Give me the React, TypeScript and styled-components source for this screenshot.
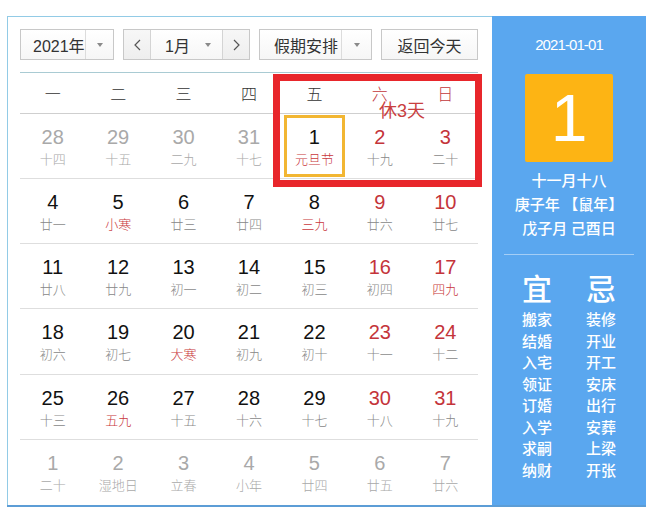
import React from "react";
import styled, { createGlobalStyle } from "styled-components";

const GlobalStyle = createGlobalStyle`
  html, body { margin: 0; padding: 0; background: #ffffff; }
  body { font-family: "Liberation Sans", "Noto Sans CJK SC", sans-serif; }
`;

const Frame = styled.div`
  display: flex;
  width: 639px;
  height: 491px;
  margin: 16px 0 0 7px;
  border-bottom: 2px solid #5c9dd6;
  box-sizing: border-box;
`;

const Main = styled.section`
  width: 485px;
  flex-shrink: 0;
  box-sizing: border-box;
  border-left: 1px solid #92cbe6;
  border-top: 1px solid #92cbe6;
  padding: 12px 14px 0 12px;
  display: flex;
  flex-direction: column;
  background: #ffffff;
`;

const Toolbar = styled.div`
  display: flex;
  gap: 9px;
  height: 31px;
  flex-shrink: 0;
`;

const Control = styled.div<{ $w: number }>`
  width: ${(p) => p.$w}px;
  height: 31px;
  box-sizing: border-box;
  border: 1px solid #c8c8c8;
  background: linear-gradient(#ffffff, #f6f6f6);
  display: flex;
  align-items: stretch;
  font-size: 16px;
  color: #333333;
`;

const Label = styled.div<{ $pad: number }>`
  flex: 1;
  display: flex;
  align-items: center;
  padding-left: ${(p) => p.$pad}px;
  white-space: nowrap;
`;

const ArrowPart = styled.div<{ $w: number }>`
  width: ${(p) => p.$w}px;
  border-left: 1px solid #dcdcdc;
  display: flex;
  align-items: center;
  justify-content: center;
`;

const Caret = styled.span`
  width: 0;
  height: 0;
  border-left: 3.5px solid transparent;
  border-right: 3.5px solid transparent;
  border-top: 4px solid #8a8a8a;
`;

const NavButton = styled.div<{ $side: "left" | "right" }>`
  width: 26px;
  background: linear-gradient(#f7f7f7, #eeeeee);
  display: flex;
  align-items: center;
  justify-content: center;
  ${(p) =>
    p.$side === "left"
      ? "border-right: 1px solid #d4d4d4;"
      : "border-left: 1px solid #d4d4d4;"}
`;

const MonthMiddle = styled.div`
  flex: 1;
  display: flex;
  align-items: center;
  justify-content: space-between;
  padding: 0 11px 0 14px;
`;

const TodayLabel = styled.div`
  flex: 1;
  display: flex;
  align-items: center;
  justify-content: center;
`;

const Grid = styled.div`
  position: relative;
  margin-top: 12px;
  flex: 1;
  display: grid;
  grid-template-columns: repeat(7, 1fr);
  grid-template-rows: 41px repeat(6, 1fr);
  border-top: 1px solid #a9cbd3;
`;

const HeaderCell = styled.div<{ $weekend: boolean }>`
  display: flex;
  align-items: center;
  justify-content: center;
  border-bottom: 1px solid #cfcfcf;
  font-family: "Noto Sans CJK SC", sans-serif;
  font-size: 16px;
  font-weight: 300;
  color: ${(p) => (p.$weekend ? "#c2373b" : "#333333")};
`;

const Cell = styled.div<{ $last: boolean }>`
  display: flex;
  padding: 1px 2px;
  box-sizing: border-box;
  min-height: 0;
  border-bottom: ${(p) => (p.$last ? "none" : "1px solid #dedede")};
`;

const DayBox = styled.div<{ $selected: boolean }>`
  flex: 1;
  display: flex;
  flex-direction: column;
  align-items: center;
  padding-top: 7px;
  border: 3px solid ${(p) => (p.$selected ? "#f2b632" : "transparent")};
`;

const Num = styled.div<{ $color: string }>`
  font-family: "Liberation Sans", sans-serif;
  font-size: 20px;
  line-height: 24px;
  color: ${(p) => p.$color};
`;

const Lunar = styled.div<{ $color: string }>`
  margin-top: 1px;
  font-family: "Noto Sans CJK SC", sans-serif;
  font-size: 13px;
  line-height: 18px;
  font-weight: 300;
  color: ${(p) => p.$color};
`;

const HolidayFrame = styled.div`
  position: absolute;
  left: 253px;
  top: 1px;
  width: 209px;
  height: 113px;
  box-sizing: border-box;
  border: 7px solid #e8262b;
  pointer-events: none;
`;

const RestNote = styled.span`
  position: absolute;
  left: 99px;
  top: 20px;
  font-family: "Liberation Sans", "Noto Sans CJK SC", sans-serif;
  font-size: 18px;
  line-height: 20px;
  color: #c9403f;
  white-space: nowrap;
`;

const Side = styled.aside`
  width: 154px;
  flex-shrink: 0;
  box-sizing: border-box;
  background: #5aa7ef;
  color: #ffffff;
  display: flex;
  flex-direction: column;
  align-items: center;
  padding-top: 19px;
`;

const DateText = styled.div`
  font-family: "Liberation Sans", sans-serif;
  font-size: 15px;
  letter-spacing: -0.9px;
  line-height: 20px;
`;

const BigDay = styled.div`
  margin-top: 19px;
  width: 88px;
  height: 88px;
  border-radius: 2px;
  background: #fdb414;
  display: flex;
  align-items: center;
  justify-content: center;
  font-family: "Liberation Sans", sans-serif;
  font-size: 66px;
  line-height: 1;
  color: #ffffff;
`;

const LunarInfo = styled.div`
  margin-top: 6px;
  font-family: "Noto Sans CJK SC", sans-serif;
  font-size: 15px;
  font-weight: 500;
  line-height: 24px;
  text-align: center;
  white-space: nowrap;
`;

const Divider = styled.div`
  margin-top: 14px;
  width: 130px;
  height: 1px;
  background: rgba(255, 255, 255, 0.45);
`;

const TwoCols = styled.div<{ $size: number; $lh: number; $mt: number }>`
  margin-top: ${(p) => p.$mt}px;
  display: grid;
  grid-template-columns: 64px 64px;
  text-align: center;
  font-family: "Noto Sans CJK SC", sans-serif;
  font-size: ${(p) => p.$size}px;
  line-height: ${(p) => p.$lh}px;
  font-weight: 500;
`;

const Chevron = ({ dir }: { dir: "left" | "right" }) => (
  <svg width="7" height="12" viewBox="0 0 7 12">
    <polyline
      points={dir === "left" ? "6,1 1,6 6,11" : "1,1 6,6 1,11"}
      fill="none"
      stroke="#555"
      strokeWidth="1.2"
    />
  </svg>
);

type Day = { n: number; l: string; out?: boolean; red?: boolean; sel?: boolean };

const rows: Day[][] = [
  [
    { n: 28, l: "十四", out: true },
    { n: 29, l: "十五", out: true },
    { n: 30, l: "二九", out: true },
    { n: 31, l: "十七", out: true },
    { n: 1, l: "元旦节", red: true, sel: true },
    { n: 2, l: "十九" },
    { n: 3, l: "二十" },
  ],
  [
    { n: 4, l: "廿一" },
    { n: 5, l: "小寒", red: true },
    { n: 6, l: "廿三" },
    { n: 7, l: "廿四" },
    { n: 8, l: "三九", red: true },
    { n: 9, l: "廿六" },
    { n: 10, l: "廿七" },
  ],
  [
    { n: 11, l: "廿八" },
    { n: 12, l: "廿九" },
    { n: 13, l: "初一" },
    { n: 14, l: "初二" },
    { n: 15, l: "初三" },
    { n: 16, l: "初四" },
    { n: 17, l: "四九", red: true },
  ],
  [
    { n: 18, l: "初六" },
    { n: 19, l: "初七" },
    { n: 20, l: "大寒", red: true },
    { n: 21, l: "初九" },
    { n: 22, l: "初十" },
    { n: 23, l: "十一" },
    { n: 24, l: "十二" },
  ],
  [
    { n: 25, l: "十三" },
    { n: 26, l: "五九", red: true },
    { n: 27, l: "十五" },
    { n: 28, l: "十六" },
    { n: 29, l: "十七" },
    { n: 30, l: "十八" },
    { n: 31, l: "十九" },
  ],
  [
    { n: 1, l: "二十", out: true },
    { n: 2, l: "湿地日", out: true },
    { n: 3, l: "立春", out: true },
    { n: 4, l: "小年", out: true },
    { n: 5, l: "廿四", out: true },
    { n: 6, l: "廿五", out: true },
    { n: 7, l: "廿六", out: true },
  ],
];

const weekdays = ["一", "二", "三", "四", "五", "六", "日"];
const yi = ["搬家", "结婚", "入宅", "领证", "订婚", "入学", "求嗣", "纳财"];
const ji = ["装修", "开业", "开工", "安床", "出行", "安葬", "上梁", "开张"];

export default function App() {
  return (
    <>
      <GlobalStyle />
      <Frame>
        <Main>
          <Toolbar>
            <Control $w={94}>
              <Label $pad={12}>2021年</Label>
              <ArrowPart $w={27}>
                <Caret />
              </ArrowPart>
            </Control>
            <Control $w={127}>
              <NavButton $side="left">
                <Chevron dir="left" />
              </NavButton>
              <MonthMiddle>
                <span>1月</span>
                <Caret />
              </MonthMiddle>
              <NavButton $side="right">
                <Chevron dir="right" />
              </NavButton>
            </Control>
            <Control $w={113}>
              <Label $pad={14}>假期安排</Label>
              <ArrowPart $w={29}>
                <Caret />
              </ArrowPart>
            </Control>
            <Control $w={97}>
              <TodayLabel>返回今天</TodayLabel>
            </Control>
          </Toolbar>
          <Grid>
            {weekdays.map((w, i) => (
              <HeaderCell key={w} $weekend={i >= 5}>
                {w}
              </HeaderCell>
            ))}
            {rows.map((row, ri) =>
              row.map((d, ci) => {
                const weekend = ci >= 5;
                const numColor = d.out ? "#a9a9a9" : weekend ? "#c4343a" : "#111111";
                const lunarColor = d.out ? "#a9a9a9" : d.red ? "#c9383c" : "#888888";
                return (
                  <Cell key={`${ri}-${ci}`} $last={ri === rows.length - 1}>
                    <DayBox $selected={!!d.sel}>
                      <Num $color={numColor}>{d.n}</Num>
                      <Lunar $color={lunarColor}>{d.l}</Lunar>
                    </DayBox>
                  </Cell>
                );
              })
            )}
            <HolidayFrame>
              <RestNote>休3天</RestNote>
            </HolidayFrame>
          </Grid>
        </Main>
        <Side>
          <DateText>2021-01-01</DateText>
          <BigDay>1</BigDay>
          <LunarInfo>
            十一月十八
            <br />
            庚子年 【鼠年】
            <br />
            戊子月 己酉日
          </LunarInfo>
          <Divider />
          <TwoCols $size={30} $lh={36} $mt={14}>
            <span>宜</span>
            <span>忌</span>
          </TwoCols>
          <TwoCols $size={15} $lh={21.5} $mt={3}>
            {yi.map((y, i) => (
              <React.Fragment key={y}>
                <span>{y}</span>
                <span>{ji[i]}</span>
              </React.Fragment>
            ))}
          </TwoCols>
        </Side>
      </Frame>
    </>
  );
}
